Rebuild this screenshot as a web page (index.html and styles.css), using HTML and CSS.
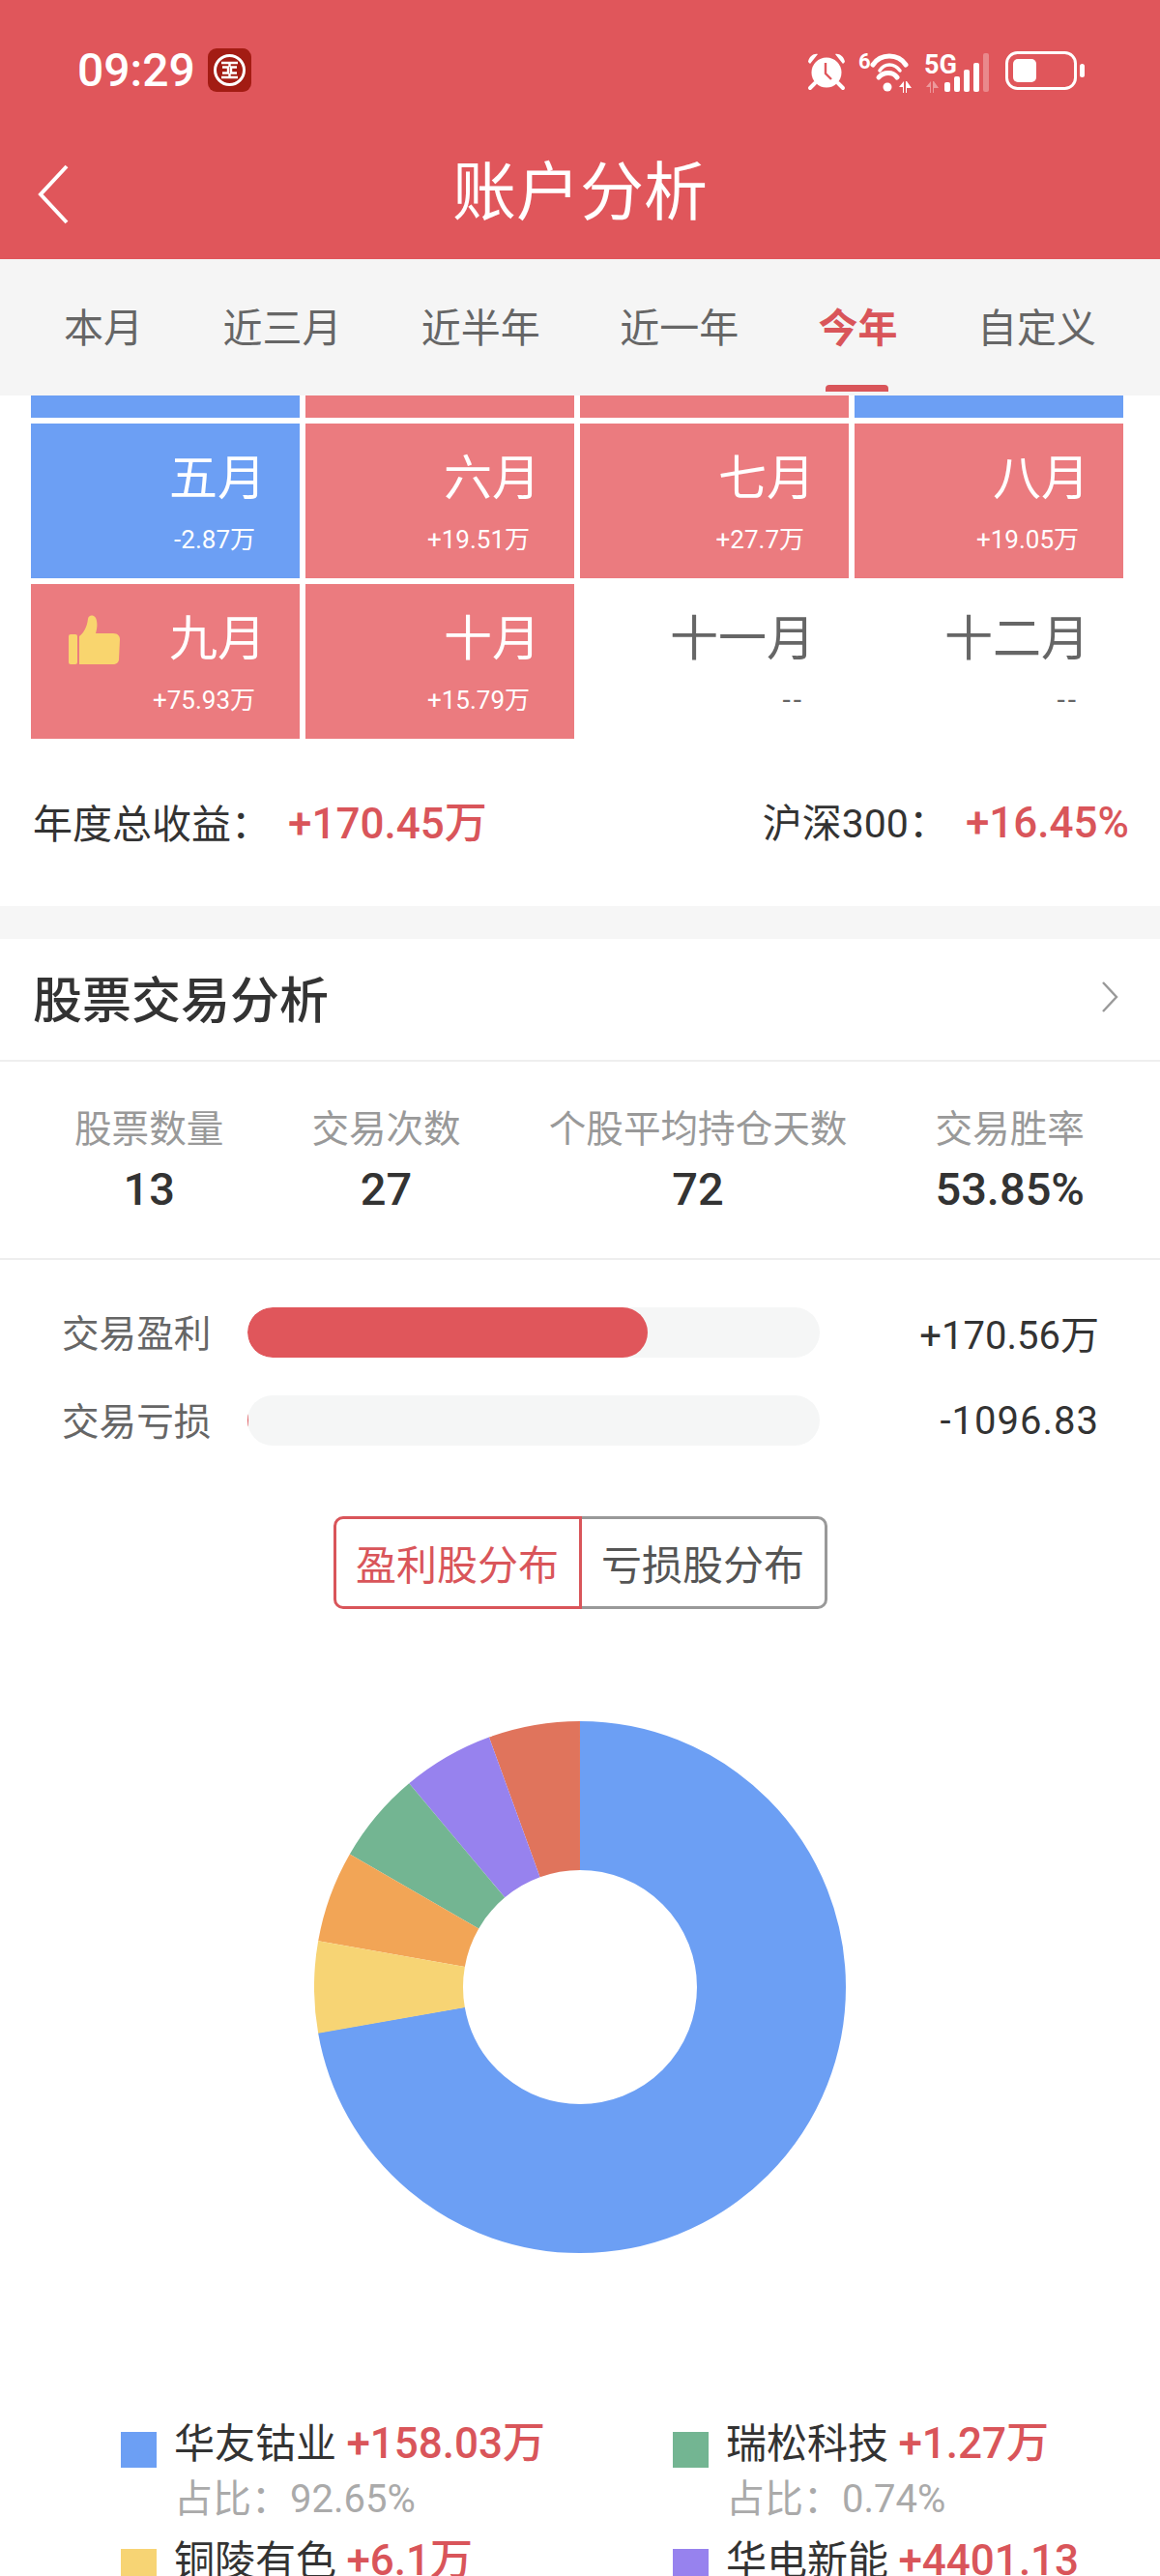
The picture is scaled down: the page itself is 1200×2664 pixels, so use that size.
FILE: index.html
```html
<!DOCTYPE html>
<html lang="zh-CN">
<head>
    <meta charset="UTF-8">
    <meta name="viewport" content="width=device-width, initial-scale=1.0">
    <title>账户分析</title>
    <link rel="stylesheet" href="styles.css">
</head>
<body>
<div class="page">
    <header class="top">
        <div class="status">
            <span class="time">09:29</span>
            <svg class="bank" viewBox="0 0 45 45" width="45" height="45">
                <rect width="45" height="45" rx="9" fill="#a31c13"/>
                <circle cx="22.5" cy="22.5" r="15" fill="none" stroke="#fff" stroke-width="3"/>
                <path d="M14 15h17M14 30h17M22.5 15v4M22.5 26v4M15 19.5h6v6h-6M30 19.5h-6v6h6" fill="none" stroke="#fff" stroke-width="2.4"/>
            </svg>
            <div class="status-right">
                <svg class="alarm" viewBox="0 0 40 40" width="40" height="40">
                    <path d="M1 10 C2 4 7 1 11 2 L3 12 Z M39 10 C38 4 33 1 29 2 L37 12 Z" fill="#fff"/>
                    <circle cx="20" cy="21" r="15.5" fill="#fff"/>
                    <path d="M19 11v11l6 6" fill="none" stroke="#e0565b" stroke-width="2.4"/>
                    <path d="M8 32l-5 5M32 32l5 5" stroke="#fff" stroke-width="4" stroke-linecap="round"/>
                </svg>
                <svg class="wifi" viewBox="0 0 58 45" width="58" height="45">
                    <text x="0" y="19" class="icon-text wifi-six">6</text>
                    <path d="M15 15 C23 3 41 3 49 15" fill="none" stroke="#fff" stroke-width="5" stroke-linecap="round"/>
                    <path d="M21 28 C26 22 36 22 40 28" fill="none" stroke="#fff" stroke-width="5" stroke-linecap="round"/>
                    <path d="M22 21 C27 13 37 13 43 21" fill="none" stroke="#fff" stroke-width="3.5" stroke-linecap="round"/>
                    <circle cx="30" cy="38" r="4.5" fill="#fff"/>
                    <path d="M42 38l5-6v12h-1v-6zM49 32h1l5 7h-5v5h-1z" fill="#fff"/>
                </svg>
                <svg class="cell-signal" viewBox="0 0 70 45" width="70" height="45">
                    <text x="1" y="24" class="icon-text signal-five">5G</text>
                    <path d="M3 38l5-6v12h-1v-6zM10 32h1l5 7h-5v5h-1z" fill="#fff" opacity=".4"/>
                    <rect x="22" y="33" width="6" height="10" rx="2" fill="#fff"/>
                    <rect x="32" y="27" width="6" height="16" rx="2" fill="#fff"/>
                    <rect x="42" y="20" width="6" height="23" rx="2" fill="#fff"/>
                    <rect x="52" y="13" width="6" height="30" rx="2" fill="#fff"/>
                    <rect x="62" y="3" width="6" height="40" rx="2" fill="#fff" opacity=".3"/>
                </svg>
                <svg class="battery" viewBox="0 0 82 40" width="82" height="40">
                    <rect x="1.5" y="1.5" width="71" height="37" rx="11" fill="none" stroke="#fff" stroke-width="3"/>
                    <rect x="8" y="8" width="24" height="24" rx="5" fill="#fff"/>
                    <rect x="77" y="13" width="5" height="14" rx="2.5" fill="#fff"/>
                </svg>
            </div>
        </div>
        <div class="nav">
            <svg class="back" viewBox="0 0 32 62" width="32" height="62">
                <path d="M30 2L3 31l27 29" fill="none" stroke="#fff" stroke-width="4"/>
            </svg>
            <h1>账户分析</h1>
        </div>
    </header>

    <nav class="tabs">
        <span class="tab">本月</span>
        <span class="tab">近三月</span>
        <span class="tab">近半年</span>
        <span class="tab">近一年</span>
        <span class="tab tab-on">今年</span>
        <span class="tab">自定义</span>
    </nav>

    <section class="months">
        <div class="cell-cut blue"></div>
        <div class="cell-cut red"></div>
        <div class="cell-cut red"></div>
        <div class="cell-cut blue"></div>

        <div class="cell blue"><div class="m-name">五月</div><div class="m-val">-2.87万</div></div>
        <div class="cell red"><div class="m-name">六月</div><div class="m-val">+19.51万</div></div>
        <div class="cell red"><div class="m-name">七月</div><div class="m-val">+27.7万</div></div>
        <div class="cell red"><div class="m-name">八月</div><div class="m-val">+19.05万</div></div>

        <div class="cell red">
            <svg class="thumb" viewBox="0 0 53 51" width="53" height="51">
                <rect x="0" y="20" width="9" height="31" rx="2" fill="#f9d56e"/>
                <path d="M11 22C16 18 19 12 20 4C20.5-1 28-1 29 6C30 11 29 15 28 19L46 19C51 19 53 22 53 25L52 46C52 49 49 51 46 51L11 51Z" fill="#f9d56e"/>
            </svg>
            <div class="m-name">九月</div><div class="m-val">+75.93万</div>
        </div>
        <div class="cell red"><div class="m-name">十月</div><div class="m-val">+15.79万</div></div>
        <div class="cell empty"><div class="m-name">十一月</div><div class="m-val m-none">--</div></div>
        <div class="cell empty"><div class="m-name">十二月</div><div class="m-val m-none">--</div></div>
    </section>

    <div class="year-total">
        <div>年度总收益：<b class="up">+170.45万</b></div>
        <div>沪深300：<b class="up">+16.45%</b></div>
    </div>

    <div class="band"></div>

    <div class="sec-head">
        <h2>股票交易分析</h2>
        <svg viewBox="0 0 18 32" width="18" height="32">
            <path d="M2 1l14 15L2 31" fill="none" stroke="#999" stroke-width="2.4"/>
        </svg>
    </div>

    <div class="stats">
        <div class="stat"><div class="stat-label">股票数量</div><div class="stat-val">13</div></div>
        <div class="stat"><div class="stat-label">交易次数</div><div class="stat-val">27</div></div>
        <div class="stat"><div class="stat-label">个股平均持仓天数</div><div class="stat-val">72</div></div>
        <div class="stat"><div class="stat-label">交易胜率</div><div class="stat-val">53.85%</div></div>
    </div>

    <div class="bars">
        <div class="bar-row">
            <span class="bar-label">交易盈利</span>
            <div class="track"><div class="fill" style="width: 70%"></div></div>
            <span class="bar-val">+170.56万</span>
        </div>
        <div class="bar-row">
            <span class="bar-label">交易亏损</span>
            <div class="track"><div class="fill" style="width: 0.1%"></div></div>
            <span class="bar-val bar-val-neg">-1096.83</span>
        </div>
    </div>

    <div class="toggle">
        <span class="tog tog-on">盈利股分布</span>
        <span class="tog">亏损股分布</span>
    </div>

    <div class="chart">
        <svg viewBox="0 0 550 550" width="550" height="550">
            <g fill="none" stroke-width="154">
                <circle cx="275" cy="275" r="198" stroke="#6c9ff4" stroke-dasharray="898.5 1244.07" transform="rotate(-90 275 275)"/>
                <circle cx="275" cy="275" r="198" stroke="#e0745c" stroke-dasharray="69.115 1244.07" transform="rotate(-110 275 275)"/>
                <circle cx="275" cy="275" r="198" stroke="#9782ee" stroke-dasharray="69.115 1244.07" transform="rotate(-130 275 275)"/>
                <circle cx="275" cy="275" r="198" stroke="#73b592" stroke-dasharray="69.115 1244.07" transform="rotate(-150 275 275)"/>
                <circle cx="275" cy="275" r="198" stroke="#f2a556" stroke-dasharray="69.115 1244.07" transform="rotate(-170 275 275)"/>
                <circle cx="275" cy="275" r="198" stroke="#f7d474" stroke-dasharray="69.115 1244.07" transform="rotate(-190 275 275)"/>
            </g>
        </svg>
    </div>

    <div class="legend">
        <div class="leg">
            <i class="swatch sw-blue"></i>
            <div>
                <div class="leg-name">华友钴业 <b class="up">+158.03万</b></div>
                <div class="leg-sub">占比：92.65%</div>
            </div>
        </div>
        <div class="leg">
            <i class="swatch sw-green"></i>
            <div>
                <div class="leg-name">瑞松科技 <b class="up">+1.27万</b></div>
                <div class="leg-sub">占比：0.74%</div>
            </div>
        </div>
        <div class="leg">
            <i class="swatch sw-yellow"></i>
            <div>
                <div class="leg-name">铜陵有色 <b class="up">+6.1万</b></div>
            </div>
        </div>
        <div class="leg">
            <i class="swatch sw-purple"></i>
            <div>
                <div class="leg-name">华电新能 <b class="up">+4401.13</b></div>
            </div>
        </div>
    </div>
</div>
</body>
</html>
```

FILE: styles.css
```css
body {
    margin: 0;
    background: #fff;
    font-family: Roboto, "Noto Sans CJK SC", sans-serif;
    color: #333;
}
.page {
    width: 1200px;
    height: 2664px;
    overflow: hidden;
}
h1, h2 {
    margin: 0;
    font-weight: 400;
}
b {
    font-weight: 500;
}
.up {
    color: #d9555a;
}

/* top red header */
.top {
    height: 268px;
    background: #e0565b;
    color: #fff;
}
.status {
    height: 150px;
    padding: 50px 78px 0 80px;
    box-sizing: border-box;
    display: flex;
    align-items: flex-start;
}
.time {
    font-size: 48px;
    font-weight: 500;
    line-height: 46px;
    margin-right: 13px;
}
.status-right {
    margin-left: auto;
    display: flex;
    align-items: flex-start;
}
.alarm {
    margin: 4px 13px 0 0;
}
.wifi {
    margin: 2px 9px 0 0;
}
.cell-signal {
    margin: 2px 15px 0 0;
}
.battery {
    margin-top: 3px;
}
.icon-text {
    fill: #fff;
    font-family: Roboto, sans-serif;
    font-weight: 700;
}
.wifi-six {
    font-size: 22px;
}
.signal-five {
    font-size: 27px;
}
.nav {
    height: 118px;
    padding-left: 39px;
    display: flex;
    align-items: center;
    position: relative;
}
.back {
    margin-top: -16px;
}
.nav h1 {
    position: absolute;
    left: 0;
    right: 0;
    top: 0;
    text-align: center;
    font-size: 66px;
    line-height: 100px;
}

/* tab bar */
.tabs {
    height: 141px;
    padding: 0 66px 6px;
    box-sizing: border-box;
    background: #f5f5f5;
    display: flex;
    justify-content: space-between;
    align-items: center;
    font-size: 41px;
    color: #666;
}
.tab {
    position: relative;
}
.tab-on {
    color: #d9555a;
    font-weight: 700;
}
.tab-on::after {
    content: "";
    position: absolute;
    left: 7px;
    right: 10px;
    top: 92px;
    height: 7px;
    border-radius: 4px 4px 0 0;
    background: #d9555a;
}

/* month grid */
.months {
    padding: 0 37px 0 32px;
    display: grid;
    grid-template-columns: repeat(4, 278px);
    grid-template-rows: 23px 160px 160px;
    gap: 6px 6px;
}
.blue {
    background: #6c9ff4;
}
.red {
    background: #eb7b7f;
}
.cell {
    position: relative;
    padding: 27px 35px 0 0;
    text-align: right;
    color: #fff;
}
.m-name {
    font-size: 50px;
    line-height: 60px;
}
.m-val {
    font-size: 26px;
    line-height: 36px;
    margin-top: 15px;
    padding-right: 11px;
}
.m-none {
    letter-spacing: 3px;
    font-size: 30px;
}
.empty {
    color: #666;
}
.thumb {
    position: absolute;
    left: 39px;
    top: 32px;
}

.year-total {
    height: 173px;
    padding: 0 32px 6px 34px;
    box-sizing: border-box;
    display: flex;
    justify-content: space-between;
    align-items: center;
    font-size: 41px;
}
.year-total b {
    margin-left: 18px;
    font-size: 44px;
}
.band {
    height: 34px;
    background: #f6f6f6;
}

/* stock section */
.sec-head {
    padding: 0 43px 6px 34px;
    box-sizing: border-box;
    height: 127px;
    display: flex;
    justify-content: space-between;
    align-items: center;
    border-bottom: 2px solid #eee;
}
.sec-head h2 {
    font-size: 51px;
    font-weight: 500;
    color: #333;
}
.stats {
    height: 205px;
    padding: 45px 78px 0 77px;
    box-sizing: border-box;
    display: flex;
    justify-content: space-between;
    border-bottom: 2px solid #eee;
}
.stat {
    text-align: center;
}
.stat-label {
    font-size: 38.6px;
    line-height: 50px;
    color: #999;
}
.stat-val {
    font-size: 47px;
    font-weight: 500;
    line-height: 74px;
}
.bars {
    padding: 49px 63px 0 64px;
    display: flex;
    flex-direction: column;
    gap: 39px;
}
.bar-row {
    display: flex;
    align-items: center;
    height: 52px;
}
.bar-label {
    width: 192px;
    font-size: 38.6px;
    color: #666;
    margin-top: -5px;
}
.track {
    width: 592px;
    height: 52px;
    border-radius: 26px;
    background: #f5f6f6;
    overflow: hidden;
}
.fill {
    height: 100%;
    border-radius: 26px;
    background: #e0565b;
}
.bar-val {
    margin-left: auto;
    font-size: 40px;
    color: #333;
}
.bar-val-neg {
    letter-spacing: 1px;
}

.toggle {
    width: 511px;
    height: 96px;
    margin: 73px auto 0;
    display: flex;
    font-size: 42px;
    line-height: 90px;
    text-align: center;
    color: #555;
}
.tog {
    flex: 1;
    padding-top: 4px;
    box-sizing: border-box;
    border: 3px solid #999;
    border-left: none;
    border-radius: 0 10px 10px 0;
}
.tog-on {
    color: #d9555a;
    border: 3px solid #d9555a;
    border-radius: 10px 0 0 10px;
}

.chart {
    margin-top: 116px;
    display: flex;
    justify-content: center;
}

/* legend under the donut */
.legend {
    margin-top: 168px;
    padding-left: 125px;
    display: grid;
    grid-template-columns: 571px 1fr;
}
.leg {
    display: flex;
    gap: 18px;
    height: 121px;
}
.swatch {
    flex: none;
    width: 37px;
    height: 37px;
    margin-top: 17px;
}
.sw-blue { background: #6c9ff4; }
.sw-green { background: #73b592; }
.sw-yellow { background: #f7d474; }
.sw-purple { background: #9782ee; }
.leg-name {
    font-size: 42px;
    line-height: 56px;
    color: #333;
    margin-top: 1px;
}
.leg-name b {
    font-size: 44px;
}
.leg-sub {
    font-size: 40px;
    line-height: 58px;
    color: #aaa;
}
```
